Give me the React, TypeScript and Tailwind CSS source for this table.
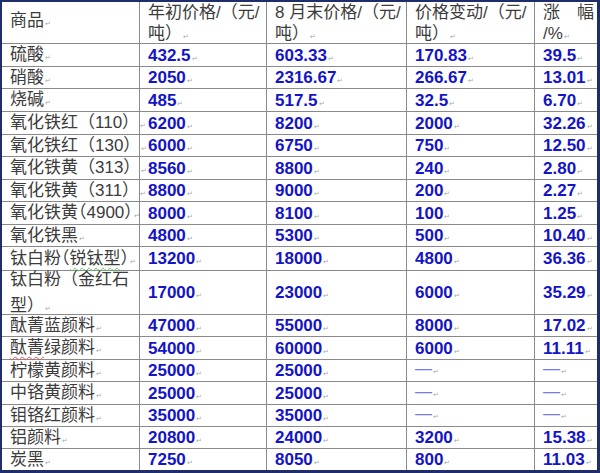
import type { ReactNode } from "react";

type Row = {
  name: ReactNode;
  start: string;
  end: string;
  change: string;
  rise: string;
  h: string;
};

const cjk = "font-['Liberation_Sans','Noto_Sans_CJK_SC',sans-serif]";

// Word paragraph mark after each cell's text
function Mark() {
  return <span className="ml-px align-baseline font-normal text-[7px] text-[#a8a8a8]">↵</span>;
}

const rows: Row[] = [
  { name: "硫酸", start: "432.5", end: "603.33", change: "170.83", rise: "39.5", h: "h-[23px]" },
  { name: "硝酸", start: "2050", end: "2316.67", change: "266.67", rise: "13.01", h: "h-[22px]" },
  { name: "烧碱", start: "485", end: "517.5", change: "32.5", rise: "6.70", h: "h-[23px]" },
  { name: "氧化铁红（110）", start: "6200", end: "8200", change: "2000", rise: "32.26", h: "h-[23px]" },
  { name: "氧化铁红（130）", start: "6000", end: "6750", change: "750", rise: "12.50", h: "h-[22px]" },
  { name: "氧化铁黄（313）", start: "8560", end: "8800", change: "240", rise: "2.80", h: "h-[23px]" },
  { name: "氧化铁黄（311）", start: "8800", end: "9000", change: "200", rise: "2.27", h: "h-[22px]" },
  {
    name: <span className="[font-feature-settings:'halt']">氧化铁黄（4900）</span>,
    start: "8000",
    end: "8100",
    change: "100",
    rise: "1.25",
    h: "h-[23px]",
  },
  { name: "氧化铁黑", start: "4800", end: "5300", change: "500", rise: "10.40", h: "h-[22px]" },
  {
    name: (
      <span className="[font-feature-settings:'halt']">
        钛白粉（
        <span className="underline decoration-wavy decoration-[#5fbf5f] decoration-1 underline-offset-[3px]">锐钛型</span>）
      </span>
    ),
    start: "13200",
    end: "18000",
    change: "4800",
    rise: "36.36",
    h: "h-[24px]",
  },
  {
    name: (
      <span className="leading-[20px] whitespace-normal">
        钛白粉（金红石
        <br />
        型）
      </span>
    ),
    start: "17000",
    end: "23000",
    change: "6000",
    rise: "35.29",
    h: "h-[44px]",
  },
  { name: "酞菁蓝颜料", start: "47000", end: "55000", change: "8000", rise: "17.02", h: "h-[22px]" },
  {
    name: (
      <span>
        <span className="underline decoration-wavy decoration-[#e05050] decoration-1 underline-offset-[3px]">酞菁</span>
        绿颜料
      </span>
    ),
    start: "54000",
    end: "60000",
    change: "6000",
    rise: "11.11",
    h: "h-[23px]",
  },
  { name: "柠檬黄颜料", start: "25000", end: "25000", change: "—", rise: "—", h: "h-[22px]" },
  { name: "中铬黄颜料", start: "25000", end: "25000", change: "—", rise: "—", h: "h-[23px]" },
  { name: "钼铬红颜料", start: "35000", end: "35000", change: "—", rise: "—", h: "h-[22px]" },
  { name: "铝颜料", start: "20800", end: "24000", change: "3200", rise: "15.38", h: "h-[22px]" },
  { name: "炭黑", start: "7250", end: "8050", change: "800", rise: "11.03", h: "h-[21px]" },
];

function Num({ v }: { v: string }) {
  if (v === "—") {
    return (
      <span className="font-['Liberation_Sans',sans-serif] text-[17px] text-[#7b7be6] -mt-[3px]">
        —<Mark />
      </span>
    );
  }
  return (
    <span className="font-['Liberation_Sans',sans-serif] font-bold text-[17px] text-[#1414c8] leading-none">
      {v}
      <Mark />
    </span>
  );
}

export default function App() {
  const line = "border-[#8a8a8a]";
  return (
    <div className="w-[600px] h-[473px] bg-white border-t-2 border-l-2 border-r-[3px] border-b-[3px] border-[#1f2d6b] overflow-hidden">
      <div className={`grid grid-cols-[138px_127px_140px_128px_62px] ${cjk} text-[17px] text-[#3c3c3c]`}>
        {/* Header */}
        <div className={`h-[42px] border-r border-b ${line} px-2 flex items-center pb-[3px]`}>
          <span>
            商品
            <Mark />
          </span>
        </div>
        <div className={`h-[42px] border-r border-b ${line} px-2 leading-[21px] whitespace-nowrap`}>
          年初价格/（元/
          <br />
          吨）
          <Mark />
        </div>
        <div className={`h-[42px] border-r border-b ${line} px-2 leading-[21px] whitespace-nowrap`}>
          8 月末价格/（元/
          <br />
          吨）
          <Mark />
        </div>
        <div className={`h-[42px] border-r border-b ${line} px-2 leading-[21px] whitespace-nowrap`}>
          价格变动/（元/
          <br />
          吨）
          <Mark />
        </div>
        <div className={`h-[42px] border-b ${line} pl-2 pr-[3px] leading-[21px] whitespace-nowrap`}>
          <div className="flex justify-between">
            <span>涨</span>
            <span>幅</span>
          </div>
          <div>
            /%
            <Mark />
          </div>
        </div>

        {/* Body */}
        {rows.map((r, i) => {
          const last = i === rows.length - 1;
          const bb = last ? "" : "border-b";
          return (
            <div key={i} className="contents">
              <div className={`${r.h} border-r ${bb} ${line} px-2 flex items-center whitespace-nowrap`}>
                <span>
                  {r.name}
                  <Mark />
                </span>
              </div>
              <div className={`${r.h} border-r ${bb} ${line} px-2 flex items-center`}>
                <Num v={r.start} />
              </div>
              <div className={`${r.h} border-r ${bb} ${line} px-2 flex items-center`}>
                <Num v={r.end} />
              </div>
              <div className={`${r.h} border-r ${bb} ${line} px-2 flex items-center`}>
                <Num v={r.change} />
              </div>
              <div className={`${r.h} ${bb} ${line} px-2 flex items-center`}>
                <Num v={r.rise} />
              </div>
            </div>
          );
        })}
      </div>
    </div>
  );
}
